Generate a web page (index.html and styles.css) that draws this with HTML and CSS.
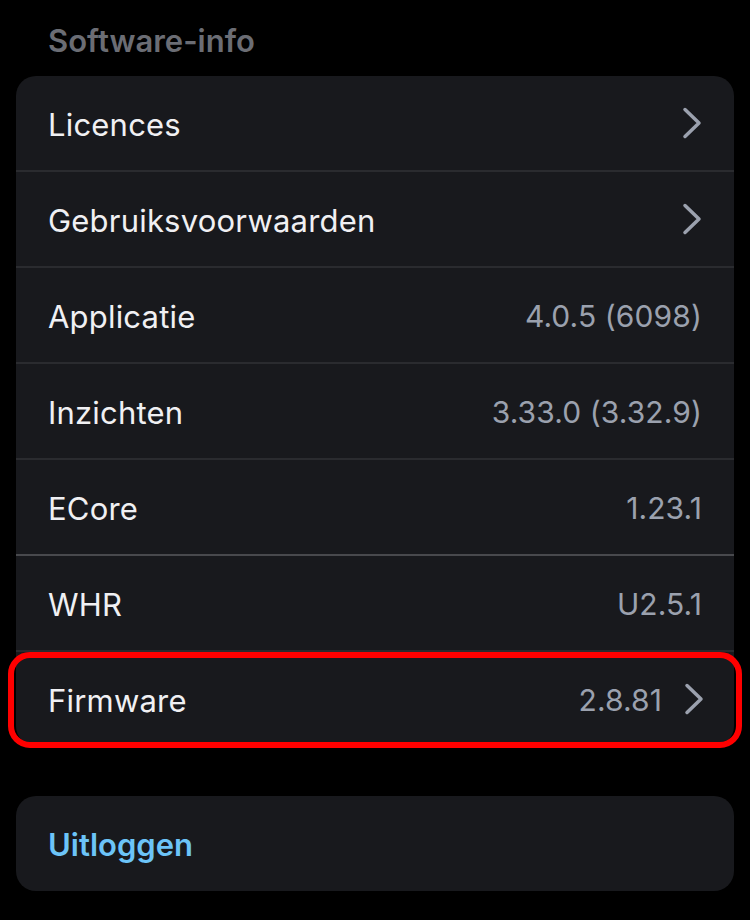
FILE: index.html
```html
<!DOCTYPE html>
<html lang="nl">
<head>
<meta charset="utf-8">
<link rel="stylesheet" href="styles.css">
</head>
<body>
<div class="page">
  <h2 class="section-title">Software-info</h2>
  <div class="card">
    <div class="row">
      <span class="label">Licences</span>
      <span class="right"><svg class="chev" viewBox="0 0 20 32"><path d="M3 2.5 L17 16 L3 29.5"/></svg></span>
    </div>
    <div class="row">
      <span class="label">Gebruiksvoorwaarden</span>
      <span class="right"><svg class="chev" viewBox="0 0 20 32"><path d="M3 2.5 L17 16 L3 29.5"/></svg></span>
    </div>
    <div class="row">
      <span class="label">Applicatie</span>
      <span class="value">4.0.5 (6098)</span>
    </div>
    <div class="row">
      <span class="label">Inzichten</span>
      <span class="value">3.33.0 (3.32.9)</span>
    </div>
    <div class="row row-strong">
      <span class="label">ECore</span>
      <span class="value">1.23.1</span>
    </div>
    <div class="row">
      <span class="label">WHR</span>
      <span class="value">U2.5.1</span>
    </div>
    <div class="row row-highlight">
      <span class="label">Firmware</span>
      <span class="right"><span class="value">2.8.81</span><svg class="chev" viewBox="0 0 20 32"><path d="M3 2.5 L17 16 L3 29.5"/></svg></span>
    </div>
  </div>
  <div class="card logout-card">
    <span class="logout">Uitloggen</span>
  </div>
</div>
</body>
</html>
```

FILE: styles.css
```css
html, body {
  margin: 0;
  padding: 0;
  background: #000;
}
body {
  font-family: Inter, "Noto Sans", sans-serif;
  color: #f0f0f3;
}
.page {
  padding: 0 16px;
}
.section-title {
  margin: 0;
  padding: 23px 0 0 32px;
  height: 76px;
  box-sizing: border-box;
  font-size: 31px;
  font-weight: 600;
  line-height: 36px;
  color: #6b6d74;
}
.card {
  background: #18191d;
  border-radius: 20px;
}
.row {
  position: relative;
  display: flex;
  align-items: center;
  justify-content: space-between;
  box-sizing: border-box;
  height: 96px;
  padding: 2px 32px 0;
  border-bottom: 2px solid #2a2b2f;
}
.row:last-child {
  border-bottom: none;
  height: 94px;
}
.row-strong {
  border-bottom-color: #48494d;
}
.label {
  font-size: 31px;
  letter-spacing: 0.2px;
}
.value {
  font-size: 30px;
  letter-spacing: 0.1px;
  color: #9ba1ae;
}
.right {
  display: flex;
  align-items: center;
  gap: 22px;
}
.chev {
  width: 20px;
  height: 32px;
  display: block;
  margin-top: -2px;
}
.chev path {
  fill: none;
  stroke: #9ba1ae;
  stroke-width: 3.5;
  stroke-linecap: round;
  stroke-linejoin: round;
}
.row-highlight .chev {
  margin-right: -2px;
}
.row-highlight::after {
  content: "";
  position: absolute;
  left: -8px;
  right: -8px;
  top: 0;
  bottom: -2px;
  border: 6px solid #ff0000;
  border-radius: 22px;
  pointer-events: none;
}
.logout-card {
  margin-top: 50px;
  height: 95px;
  display: flex;
  align-items: center;
  padding: 2px 32px 0;
  box-sizing: border-box;
}
.logout {
  font-size: 31px;
  font-weight: 600;
  color: #6cc4f8;
}
```
